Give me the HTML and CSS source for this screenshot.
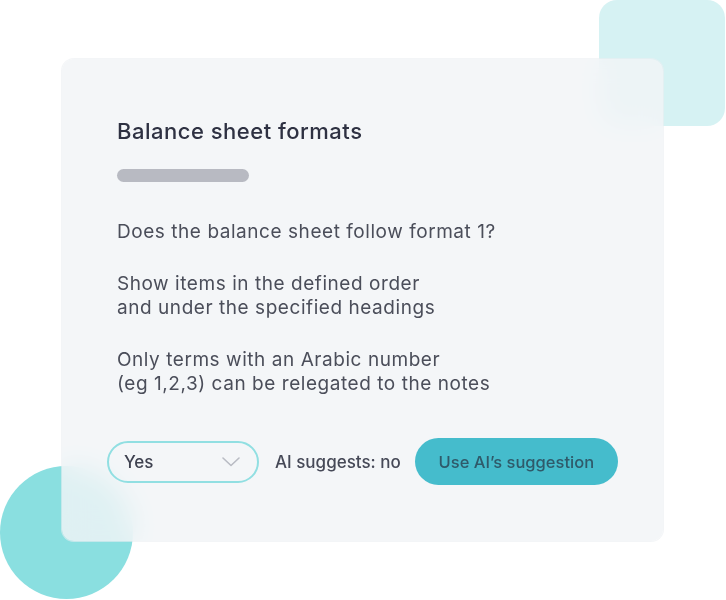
FILE: index.html
```html
<!DOCTYPE html>
<html>
<head>
<meta charset="utf-8">
<link rel="stylesheet" href="styles.css">
</head>
<body>
<div class="stage">
  <div class="deco-square"></div>
  <div class="deco-circle"></div>
  <div class="card">
    <h1 class="title">Balance sheet formats</h1>
    <div class="bar"></div>
    <p class="text">Does the balance sheet follow format 1?</p>
    <p class="text">Show items in the defined order<br>and under the specified headings</p>
    <p class="text">Only terms with an Arabic number<br>(eg 1,2,3) can be relegated to the notes</p>
    <div class="actions">
      <div class="select">
        <span>Yes</span>
        <svg class="chev" width="18" height="10" viewBox="0 0 18 10"><path d="M1 1 L9 8.5 L17 1" fill="none" stroke="#b9bcc4" stroke-width="1.6" stroke-linecap="round" stroke-linejoin="round"/></svg>
      </div>
      <span class="hint">AI suggests: no</span>
      <button class="btn">Use AI’s suggestion</button>
    </div>
  </div>
</div>
</body>
</html>
```

FILE: styles.css
```css
html, body {
  margin: 0;
  padding: 0;
  background: #ffffff;
}
.stage {
  position: relative;
  width: 726px;
  height: 600px;
  overflow: hidden;
  padding: 59px 0 0 62px;
  box-sizing: border-box;
  font-family: "Inter", "Open Sans", sans-serif;
}
.deco-square {
  position: absolute;
  left: 599px;
  top: 0;
  width: 126px;
  height: 126px;
  border-radius: 18px;
  background: #d6f2f3;
}
.deco-circle {
  position: absolute;
  left: 0;
  top: 466px;
  width: 133px;
  height: 133px;
  border-radius: 50%;
  background: #8adfe0;
}
.card {
  position: relative;
  width: 601px;
  height: 482px;
  box-sizing: border-box;
  border-radius: 12px;
  background: rgba(242, 244, 246, 0.82);
  backdrop-filter: blur(14px);
  -webkit-backdrop-filter: blur(14px);
  box-shadow: 0 0 0 1px rgba(235, 238, 241, 0.6);
  padding: 59px 0 0 55px;
}
.title {
  margin: 0;
  font-size: 22px;
  line-height: 26px;
  font-weight: 500;
  letter-spacing: 0.5px;
  color: #2e3142;
}
.bar {
  margin-top: 25px;
  width: 132px;
  height: 13px;
  border-radius: 7px;
  background: #b8bac2;
}
.text {
  margin: 38px 0 0;
  font-size: 19px;
  line-height: 24px;
  letter-spacing: 0.55px;
  color: #4b4e5a;
}
.text + .text {
  margin-top: 28px;
}
.actions {
  display: flex;
  align-items: center;
  margin-top: 42px;
  margin-left: -10px;
}
.select {
  width: 152px;
  height: 42px;
  box-sizing: border-box;
  border: 2px solid #91dfe2;
  border-radius: 21px;
  display: flex;
  align-items: center;
  justify-content: space-between;
  padding: 0 17px 0 15px;
  font-size: 17px;
  font-weight: 500;
  color: #3f4250;
}
.hint {
  margin-left: 16px;
  font-size: 17px;
  font-weight: 500;
  color: #464957;
}
.btn {
  margin-left: 14px;
  width: 203px;
  height: 47px;
  border: none;
  border-radius: 24px;
  background: #45bccc;
  font-family: inherit;
  font-size: 16.5px;
  font-weight: 500;
  color: #2f5a6a;
  padding: 0;
}
```
